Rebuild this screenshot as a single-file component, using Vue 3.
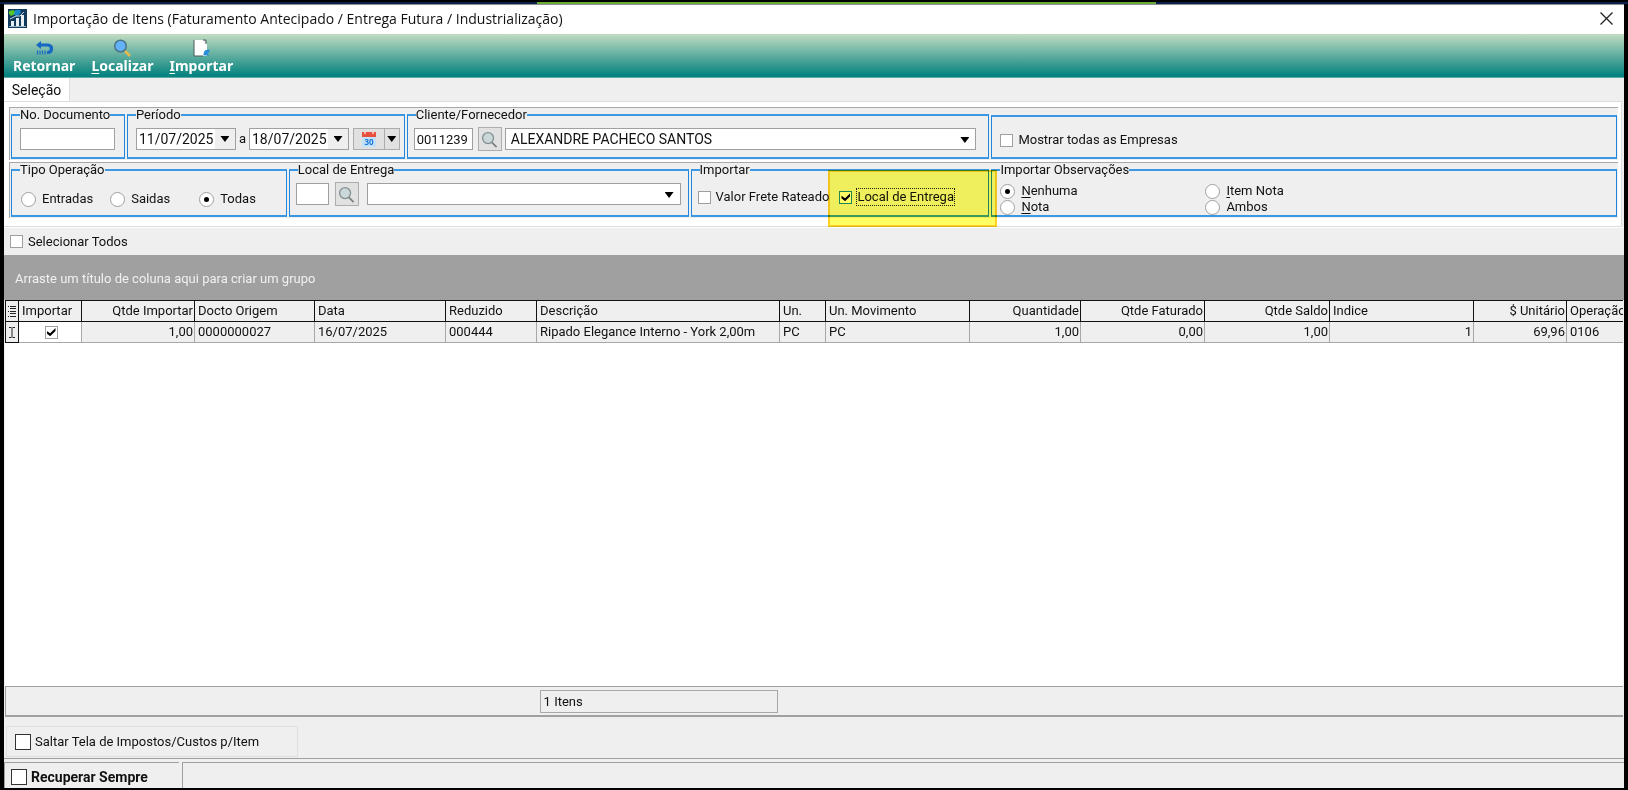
<script setup>
import { ref } from 'vue'

const columns = [
  { label: 'Importar', width: 63, value: '' },
  { label: 'Qtde Importar', width: 113, value: '1,00', num: true },
  { label: 'Docto Origem', width: 120, value: '0000000027' },
  { label: 'Data', width: 131, value: '16/07/2025' },
  { label: 'Reduzido', width: 91, value: '000444' },
  { label: 'Descrição', width: 243, value: 'Ripado Elegance Interno - York 2,00m' },
  { label: 'Un.', width: 46, value: 'PC' },
  { label: 'Un. Movimento', width: 144, value: 'PC' },
  { label: 'Quantidade', width: 111, value: '1,00', num: true },
  { label: 'Qtde Faturado', width: 124, value: '0,00', num: true },
  { label: 'Qtde Saldo', width: 125, value: '1,00', num: true },
  { label: 'Indice', width: 144, value: '1', numValue: true },
  { label: '$ Unitário', width: 93, value: '69,96', num: true },
  { label: 'Operação', width: 56, value: '0106' },
]
const tipo = ref('todas')
const obs = ref('nenhuma')
const local = ref(true)
const importRow = ref(true)
const de = ref('11/07/2025')
const ate = ref('18/07/2025')
const codigo = ref('0011239')
</script>

<template>
  <div class="screen">
    <main class="window">
      <header class="titlebar">
        <svg class="app-icon" viewBox="0 0 19 19" aria-hidden="true">
          <rect width="19" height="19" fill="#123a5c" />
          <path d="M1 2l4-1 3 2-1 2-4 2-2-2z" fill="#59c52b" />
          <path d="M7 1h5l1 3-4 3-3-1z" fill="#1687c9" />
          <path d="M3 12h3v5H3zM8 9h3v8H8zM13 6h3v11h-3z" fill="#e8f0f5" />
          <path d="M2 10l6-3 4 0 4-4" fill="none" stroke="#c4dbe8" />
          <path d="M1 17.500h17" stroke="#9db8c9" />
        </svg>
        <h1>Importação de Itens (Faturamento Antecipado / Entrega Futura / Industrialização)</h1>
        <button class="close" type="button" aria-label="Fechar">
          <svg viewBox="0 0 13 13"><path d="M.5.500l12 12M12.500.500l-12 12" stroke="#222" stroke-width="1.300" /></svg>
        </button>
      </header>

      <nav class="toolbar">
        <button type="button">
          <svg viewBox="0 0 18 18">
            <path d="M6 2L1 6l5 4V7.500h6.500a2 2 0 0 1 0 4.500H12v3h1a5 5 0 0 0 0-10.500H6z" fill="#1767c4" />
            <path d="M2.500 11.500v4M5 11.500v4M7.500 11.500v4M10 11.500v4" stroke="#1767c4" stroke-width="1.200" />
          </svg>
          <span>Retornar</span>
        </button>
        <button type="button">
          <svg viewBox="0 0 18 18">
            <path d="M12 12l5 5" stroke="#e2b94e" stroke-width="2.600" />
            <circle cx="7.500" cy="7" r="5.800" fill="#63b3fa" stroke="#4b7488" stroke-width="1.500" />
          </svg>
          <span><u>L</u>ocalizar</span>
        </button>
        <button type="button">
          <svg viewBox="0 0 18 18">
            <path d="M2 1h9l4 4v12H2z" fill="#fff" />
            <path d="M2 1v16h9" fill="none" stroke="#4b5a58" />
            <path d="M11 1h3v4" fill="#dde" stroke="#4b5a58" />
            <path d="M17.500 10.500c-5 0-6 2-6 6h6l-2-2 2-1.500z" fill="#2a8fd8" />
          </svg>
          <span><u>I</u>mportar</span>
        </button>
      </nav>

      <div class="tabs" role="tablist">
        <button class="tab" role="tab" aria-selected="true" type="button">Seleção</button>
      </div>

      <section class="panel">
        <div class="row row-a">
          <fieldset>
            <legend><label for="doc">No. Documento</label></legend>
            <div class="body doc"><input id="doc" class="field" type="text" /></div>
          </fieldset>
          <fieldset>
            <legend>Período</legend>
            <div class="body period">
              <div class="combo date">
                <input v-model="de" type="text" aria-label="Data inicial" />
                <button type="button" aria-label="Abrir calendário"><i class="arrow"></i></button>
              </div>
              <span class="sep">a</span>
              <div class="combo date">
                <input v-model="ate" type="text" aria-label="Data final" />
                <button type="button" aria-label="Abrir calendário"><i class="arrow"></i></button>
              </div>
              <div class="split">
                <button class="cal" type="button" aria-label="Calendário">
                  <svg viewBox="0 0 16 16">
                    <rect x="1" y="2" width="14" height="14" fill="#c3e1fb" />
                    <rect x="1" y="1" width="14" height="5" fill="#e8503f" />
                    <path d="M4 0v3M12 0v3" stroke="#f6d5d0" stroke-width="1.500" />
                    <text x="8" y="14" text-anchor="middle">30</text>
                  </svg>
                </button>
                <button class="drop" type="button" aria-label="Mais períodos"><i class="arrow"></i></button>
              </div>
            </div>
          </fieldset>
          <fieldset>
            <legend>Cliente/Fornecedor</legend>
            <div class="body client">
              <input v-model="codigo" class="field code" type="text" aria-label="Código do cliente" />
              <button class="search" type="button" aria-label="Pesquisar cliente">
                <svg viewBox="0 0 18 18"><path d="M11.500 12l5 5" stroke="#77807f" stroke-width="1.800" /><circle cx="7.500" cy="7.500" r="5.800" fill="#cbd8da" stroke="#84908f" stroke-width="1.400" /></svg>
              </button>
              <div class="combo grow">
                <select aria-label="Cliente/Fornecedor"><option>ALEXANDRE PACHECO SANTOS</option></select>
                <i class="arrow over"></i>
              </div>
            </div>
          </fieldset>
          <fieldset class="bare">
            <div class="body all"><label><input type="checkbox" />Mostrar todas as Empresas</label></div>
          </fieldset>
        </div>

        <div class="row row-b">
          <fieldset>
            <legend>Tipo Operação</legend>
            <div class="body tipo">
              <label><input v-model="tipo" type="radio" name="tipo" value="entradas" />Entradas</label>
              <label><input v-model="tipo" type="radio" name="tipo" value="saidas" />Saidas</label>
              <label><input v-model="tipo" type="radio" name="tipo" value="todas" />Todas</label>
            </div>
          </fieldset>
          <fieldset>
            <legend>Local de Entrega</legend>
            <div class="body place">
              <input class="field short" type="text" aria-label="Código do local" />
              <button class="search" type="button" aria-label="Pesquisar local">
                <svg viewBox="0 0 18 18"><path d="M11.500 12l5 5" stroke="#77807f" stroke-width="1.800" /><circle cx="7.500" cy="7.500" r="5.800" fill="#cbd8da" stroke="#84908f" stroke-width="1.400" /></svg>
              </button>
              <div class="combo grow">
                <select aria-label="Local de Entrega"><option></option></select>
                <i class="arrow over"></i>
              </div>
            </div>
          </fieldset>
          <fieldset class="marked">
            <legend>Importar</legend>
            <div class="body opts">
              <label><input type="checkbox" />Valor Frete Rateado</label>
              <label><input v-model="local" class="hot" type="checkbox" /><span class="focus">Local de Entrega</span></label>
            </div>
            <div class="highlight"></div>
          </fieldset>
          <fieldset>
            <legend>Importar Observações</legend>
            <div class="body obs">
              <label><input v-model="obs" type="radio" name="obs" value="nenhuma" /><span><u>N</u>enhuma</span></label>
              <label><input v-model="obs" type="radio" name="obs" value="item" /><span><u>I</u>tem Nota</span></label>
              <label><input v-model="obs" type="radio" name="obs" value="nota" /><span><u>N</u>ota</span></label>
              <label><input v-model="obs" type="radio" name="obs" value="ambos" /><span>Ambos</span></label>
            </div>
          </fieldset>
        </div>
      </section>

      <div class="select-all"><label><input type="checkbox" />Selecionar Todos</label></div>
      <div class="group-by">Arraste um título de coluna aqui para criar um grupo</div>

      <div class="grid">
        <table>
          <colgroup>
            <col :style="{ width: '14px' }" />
            <col v-for="c in columns" :key="c.label" :style="{ width: c.width + 'px' }" />
          </colgroup>
          <thead>
            <tr>
              <th class="mark">
                <svg viewBox="0 0 8 11"><path d="M2 .5h6M2 2.500h6M2 5.500h6M2 7.500h6M2 10.500h6" stroke="#222" /><path d="M0 .5h1M0 5.500h1M0 10.500h1" stroke="#222" /></svg>
              </th>
              <th v-for="c in columns" :key="c.label" :class="{ num: c.num }">{{ c.label }}</th>
            </tr>
          </thead>
          <tbody>
            <tr>
              <td class="mark">
                <svg viewBox="0 0 8 11"><path d="M1 .5h2.500M4.500.500H7M4 1v9M1 10.500h2.500M4.500 10.500H7" stroke="#222" fill="none" /></svg>
              </td>
              <td v-for="(c, i) in columns" :key="c.label" :class="{ num: c.num || c.numValue, pick: i === 0 }">
                <input v-if="i === 0" v-model="importRow" type="checkbox" aria-label="Importar item" />
                <template v-else>{{ c.value }}</template>
              </td>
            </tr>
          </tbody>
        </table>
      </div>
      <div class="summary"><div class="count">1 Itens</div></div>

      <div class="skip">
        <label class="skip-box"><input class="big" type="checkbox" />Saltar Tela de Impostos/Custos p/Item</label>
      </div>
      <footer class="status">
        <label class="recover"><input class="big" type="checkbox" />Recuperar Sempre</label>
        <div class="rest"></div>
      </footer>
    </main>
  </div>
</template>

<style>
body {
  background: #000;
}
</style>

<style scoped>
* {
  box-sizing: border-box;
}
.screen {
  display: flex;
  min-height: 100vh;
  padding: 4px 4px 2px;
  background: linear-gradient(90deg, #0b1f4d 33%, #6aaa35 33%, #6aaa35 71%, #0b1f4d 71%) 0 2px / 100% 2px no-repeat #000;
  font: 13px/16px Roboto, "Liberation Sans", sans-serif;
  color: #111;
}
.window {
  display: flex;
  flex: 1;
  flex-direction: column;
  min-width: 0;
  border-top: 1px solid #8c8f96;
  background: #efefef;
}
button,
input,
select {
  margin: 0;
  padding: 0;
  border: 0;
  border-radius: 0;
  font: inherit;
  color: inherit;
  background: none;
  outline: 0;
}
svg {
  display: block;
}
label {
  display: flex;
  align-items: center;
  white-space: nowrap;
}
.titlebar {
  display: flex;
  align-items: center;
  gap: 6px;
  height: 29px;
  padding: 0 11px 2px 4px;
  background: #fff;
}
.app-icon {
  width: 19px;
  height: 19px;
}
h1 {
  flex: 1;
  margin: 0;
  font: 14px/20px "Open Sans", sans-serif;
  white-space: nowrap;
}
.close svg {
  width: 13px;
  height: 13px;
}
.toolbar {
  display: flex;
  gap: 16px;
  height: 44px;
  padding: 5px 9px 0;
  background: linear-gradient(#c1dcc2, #088480 95%);
  border-bottom: 1px solid #5eaaa6;
}
.toolbar button {
  display: flex;
  flex-direction: column;
  align-items: center;
  font: bold 14px/18px "Noto Sans", sans-serif;
  color: #fff;
}
.toolbar svg {
  width: 18px;
  height: 18px;
}
u {
  text-underline-offset: 2px;
}
.tabs {
  display: flex;
  height: 23px;
}
.tab {
  width: 66px;
  height: 25px;
  padding-bottom: 2px;
  font-size: 14px;
  background: #fff;
  border-right: 1px solid #ddd;
}
.panel {
  display: flex;
  flex-direction: column;
  gap: 2px;
  padding: 5px 3px 8px 5px;
  background: #fff;
  border: 1px solid #ddd;
  border-left: 0;
  margin-right: 2px;
}
.row {
  display: grid;
  gap: 2px;
  padding: 0 1px 0 1px;
  background: #efefef;
  border-top: 1px solid #a8a8a8;
  border-left: 1px solid #a8a8a8;
}
.row-a {
  grid-template-columns: 114fr 278fr 583fr 626fr;
  height: 53px;
}
.row-b {
  grid-template-columns: 276fr 400fr 299fr 626fr;
  height: 56px;
}
fieldset {
  min-width: 0;
  margin: 0 0 1px;
  padding: 0;
  border: 2px solid #3d98e4;
  border-color: #3d98e4 #1f86de;
  border-width: 2px 1px;
}
legend {
  margin-left: 8px;
  padding: 0;
  line-height: 14px;
  white-space: nowrap;
}
.bare {
  margin-top: 7px;
}
.body {
  display: flex;
  align-items: center;
  height: 24px;
  margin-top: 5px;
}
.field,
.combo {
  height: 22px;
  border: 1px solid #a0a0a0;
  background: #fff;
}
.field {
  padding: 0 2px;
}
.doc {
  padding: 0 9px 0 8px;
}
.doc .field {
  width: 100%;
}
.period {
  padding: 0 4px 0 8px;
}
.combo {
  display: flex;
  position: relative;
  min-width: 0;
}
.date {
  flex: 0 0 100px;
  font-size: 14px;
}
.date input {
  flex: 1;
  min-width: 0;
  padding-left: 2px;
}
.date button {
  display: grid;
  place-items: center;
  width: 20px;
  background: #efefef;
}
.arrow {
  width: 9px;
  height: 6px;
  background: #000;
  clip-path: polygon(0 0, 100% 0, 50% 100%);
}
.over {
  position: absolute;
  top: 8px;
  right: 6px;
}
.sep {
  padding: 0 3px;
}
.split {
  display: flex;
  height: 22px;
  margin-left: auto;
}
.split button {
  display: grid;
  place-items: center;
  border: 1px solid #adadad;
  background: #e1e1e1;
}
.split .cal {
  width: 32px;
}
.split .drop {
  width: 16px;
  margin-left: -1px;
}
.cal svg {
  width: 16px;
  height: 16px;
}
.cal text {
  font: bold 8px "Open Sans", sans-serif;
  fill: #1976d2;
}
.client {
  padding: 0 12px 0 6px;
}
.code {
  width: 59px;
  margin-right: 5px;
}
.search {
  display: grid;
  flex: none;
  place-items: center;
  width: 24px;
  height: 24px;
  margin-right: 3px;
  border: 1px solid #adadad;
  background: #e1e1e1;
}
.search svg {
  width: 17px;
  height: 17px;
}
.grow {
  flex: 1;
}
select {
  flex: 1;
  min-width: 0;
  padding: 0 24px 0 5px;
  font-size: 14px;
  appearance: none;
}
.all {
  margin-top: 11px;
  padding-left: 8px;
}
.place {
  padding: 0 7px 0 6px;
}
.short {
  width: 33px;
  margin-right: 6px;
}
.place .search {
  margin-right: 8px;
}
.tipo {
  gap: 17px;
  height: 30px;
  margin-top: 7px;
  padding-left: 9px;
}
.tipo label:last-child {
  margin-left: 12px;
}
.marked {
  position: relative;
}
.opts {
  gap: 10px;
  height: 30px;
  padding-left: 6px;
}
.focus {
  outline: 1px dotted #222;
}
.highlight {
  position: absolute;
  top: -7px;
  right: -9px;
  bottom: -12px;
  width: 169px;
  border: 2px solid #ffd21f;
  background: #ffff63;
  mix-blend-mode: multiply;
  pointer-events: none;
}
.obs {
  display: grid;
  grid-template-columns: 205px 1fr;
  grid-auto-rows: 16px;
  align-content: start;
  height: 32px;
  margin-top: 6px;
  padding-left: 8px;
}
input[type="checkbox"],
input[type="radio"] {
  position: relative;
  flex: none;
  width: 13px;
  height: 13px;
  margin-right: 5px;
  border: 1px solid #a0a0a0;
  background: #fff;
  appearance: none;
}
input[type="radio"] {
  width: 15px;
  height: 15px;
  margin-right: 6px;
  border-radius: 50%;
}
input[type="radio"]:checked::before {
  content: "";
  position: absolute;
  inset: 4px;
  border-radius: 50%;
  background: #000;
}
input[type="checkbox"]:checked::before {
  content: "";
  position: absolute;
  inset: 1px;
  background: #000;
  clip-path: polygon(0 35%, 40% 65%, 100% 5%, 100% 38%, 40% 98%, 0 65%);
}
input.hot {
  border-color: #1f86de;
}
input.big {
  width: 16px;
  height: 16px;
  margin-right: 4px;
  border-color: #333;
}
.select-all {
  display: flex;
  height: 28px;
  padding-left: 6px;
  border-top: 1px solid #fff;
}
.group-by {
  height: 45px;
  padding-left: 11px;
  line-height: 48px;
  background: #a0a0a0;
  color: #f0f0f0;
}
.grid {
  flex: 1;
  margin: 0 1px;
  overflow: hidden;
  background: #fff;
}
table {
  width: 100%;
  table-layout: fixed;
  border-spacing: 0;
}
th,
td {
  height: 21px;
  padding: 0 1px 0 3px;
  overflow: hidden;
  text-align: left;
  font-weight: normal;
  white-space: nowrap;
  background: #efefef;
  border-right: 1px solid #a8a8a8;
  border-bottom: 1px solid #a8a8a8;
}
th {
  height: 22px;
  border-top: 1px solid #111;
  border-right-color: #111;
  border-bottom-color: #111;
}
th:last-child,
td:last-child {
  padding-right: 0;
  border-right: 0;
}
.mark {
  padding: 0 0 0 2px;
  border-left: 1px solid #111;
  border-right-color: #111;
  border-bottom-color: #111;
}
.mark svg {
  width: 8px;
  height: 11px;
}
.num {
  text-align: right;
}
.pick {
  background: #fff;
}
td input[type="checkbox"] {
  display: block;
  margin: 0 auto;
}
.summary {
  display: flex;
  height: 31px;
  margin: 0 1px;
  padding-top: 3px;
  border: solid #a0a0a0;
  border-width: 1px 0 2px 1px;
}
.count {
  width: 238px;
  height: 23px;
  margin-left: 33%;
  padding-left: 3px;
  line-height: 22px;
  border: 1px solid #a8a8a8;
}
.skip {
  height: 42px;
  padding: 9px 2px 0;
  border-bottom: 1px solid #a0a0a0;
}
.skip-box {
  width: 292px;
  height: 31px;
  padding-left: 8px;
  border: 1px solid #e0e0e0;
}
.status {
  display: flex;
  gap: 3px;
  height: 29px;
  padding-top: 3px;
}
.recover,
.rest {
  border-top: 1px solid #a0a0a0;
  border-left: 1px solid #a0a0a0;
}
.recover {
  width: 175px;
  padding: 3px 0 0 6px;
  font-size: 14px;
  font-weight: bold;
}
.rest {
  flex: 1;
}
</style>
